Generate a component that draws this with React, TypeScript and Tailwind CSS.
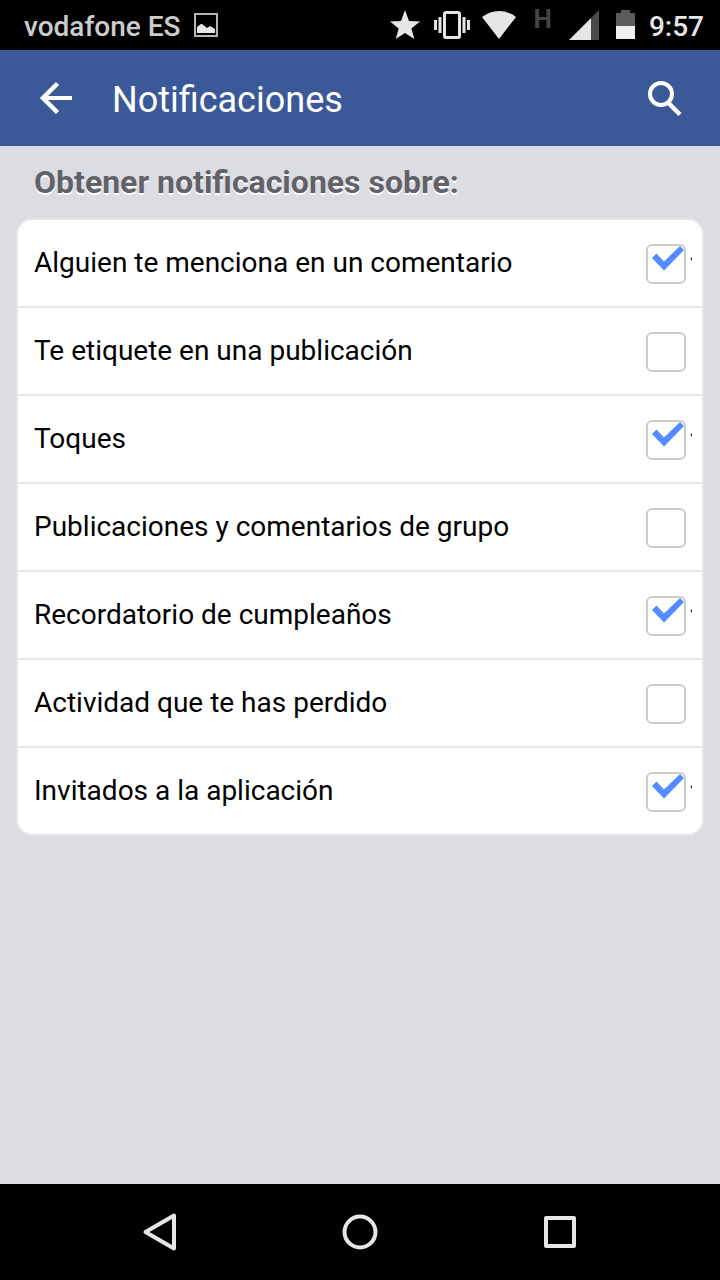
import { useState } from 'react';

interface Option {
  id: string;
  label: string;
  enabled: boolean;
}

const OPTIONS: Option[] = [
  { id: 'mention',   label: 'Alguien te menciona en un comentario', enabled: true },
  { id: 'tag',       label: 'Te etiquete en una publicación',       enabled: false },
  { id: 'pokes',     label: 'Toques',                               enabled: true },
  { id: 'group',     label: 'Publicaciones y comentarios de grupo', enabled: false },
  { id: 'birthdays', label: 'Recordatorio de cumpleaños',           enabled: true },
  { id: 'missed',    label: 'Actividad que te has perdido',         enabled: false },
  { id: 'invites',   label: 'Invitados a la aplicación',            enabled: true },
];

function StatusBar() {
  return (
    <div className="flex h-[50px] shrink-0 items-center justify-between bg-black pl-6 pr-4 text-[28px] leading-8 font-medium">
      <div className="flex items-center gap-3 text-[#cccccc]">
        <span className="pt-1">vodafone ES</span>
        <svg width="26" height="24" viewBox="0 0 26 24" fill="none" aria-hidden="true">
          <rect x="2" y="1" width="22" height="22" stroke="#b2b6b2" strokeWidth="2" />
          <path d="M4 20v-6l4-3h1l5 4 3-2 5 3v4z" fill="#e6e6e6" />
        </svg>
      </div>

      <div className="flex items-center gap-3 text-[#e6e6e6]">
        <svg width="32" height="30" viewBox="0 0 32 30" fill="currentColor" aria-hidden="true">
          <path d="M15 0l4 11 11 .5-8.6 7L24.3 29 15 23 5.7 29l3-10.5L0 11.5 11 11z" />
        </svg>
        <svg width="36" height="30" viewBox="0 0 36 30" fill="currentColor" aria-hidden="true">
          <rect x="10.5" y="2.5" width="15" height="25" rx="1.5" fill="none" stroke="currentColor" strokeWidth="3" />
          <path d="M0 10h3v10H0zM4.500 7h3v16h-3zM28.500 7h3v16h-3zM33 10h3v10h-3z" />
        </svg>
        <svg width="36" height="30" viewBox="0 0 36 30" fill="currentColor" aria-hidden="true">
          <path d="M0 7Q8 1 17 1t17 6L17 29z" />
        </svg>
        <span className="self-start pl-1 text-[26px] leading-6 font-bold text-[#444444]">H</span>
        <svg width="36" height="30" viewBox="0 0 36 30" aria-hidden="true">
          <path d="M5 30L27 8v22z" fill="#e6e6e6" />
          <path d="M27 8l8-8v30h-8z" fill="#4a4a4a" />
        </svg>
        <svg width="25" height="30" viewBox="0 0 25 30" aria-hidden="true">
          <path d="M9 0h9v3h5v13H4V3h5z" fill="#5c5c5c" />
          <path d="M4 16h19v13H4z" fill="#efefef" />
        </svg>
        <span className="pt-1">9:57</span>
      </div>
    </div>
  );
}

function AppHeader() {
  return (
    <header className="flex h-24 shrink-0 items-center bg-[#3b5998] px-9 text-white">
      <button type="button" aria-label="Atrás" className="flex size-10 items-center justify-center">
        <svg width="40" height="40" viewBox="0 0 40 40" fill="none" stroke="currentColor" aria-hidden="true">
          <path d="M36 20H7" strokeWidth="4" />
          <path d="M21.5 5.5L7 20l14.5 14.5" strokeWidth="4.5" />
        </svg>
      </button>
      <h1 className="flex-1 pt-1 pl-9 text-4xl leading-10">Notificaciones</h1>
      <button type="button" aria-label="Buscar" className="flex size-10 items-center justify-center">
        <svg width="40" height="40" viewBox="0 0 40 40" fill="none" stroke="currentColor" aria-hidden="true">
          <circle cx="17" cy="16" r="11" strokeWidth="4" />
          <path d="M25 25.500L36 36.500" strokeWidth="4.500" />
        </svg>
      </button>
    </header>
  );
}

interface OptionRowProps {
  option: Option;
  onToggle: (id: string) => void;
}

function OptionRow({ option, onToggle }: OptionRowProps) {
  return (
    <li>
      <label htmlFor={option.id} className="flex items-start px-4 pt-6 pb-[22px]">
        <span className="min-w-0 flex-1 text-[28px] leading-[38px] text-black">{option.label}</span>
        <span className="relative size-10 shrink-0">
          <input
            id={option.id}
            type="checkbox"
            checked={option.enabled}
            onChange={() => onToggle(option.id)}
            className="block size-10 appearance-none rounded-md border-2 border-[#cccccc] bg-white"
          />
          {option.enabled && (
            <svg
              width="46"
              height="40"
              viewBox="0 0 46 40"
              aria-hidden="true"
              className="pointer-events-none absolute top-0 left-0 max-w-none"
            >
              <path d="M6 14l4.500-4.500L18 17.500 34 2l4 4-20 20.500z" fill="#528cff" />
              <path d="M46 13.500a1.500 1.500 0 0 0 0 3z" fill="#3a4257" />
              <path d="M45 0h1v2h-1z" fill="#f0f0f2" />
            </svg>
          )}
        </span>
      </label>
    </li>
  );
}

function NavBar() {
  return (
    <nav className="flex h-24 shrink-0 items-center bg-black px-[60px] text-[#e6e6e6]">
      <button type="button" aria-label="Volver" className="flex flex-1 justify-center">
        <svg width="40" height="40" viewBox="0 0 40 40" fill="none" stroke="currentColor" strokeWidth="4" strokeLinejoin="round" aria-hidden="true">
          <path d="M34 3.500v33L5.500 20z" />
        </svg>
      </button>
      <button type="button" aria-label="Inicio" className="flex flex-1 justify-center">
        <svg width="40" height="40" viewBox="0 0 40 40" fill="none" stroke="currentColor" strokeWidth="4" aria-hidden="true">
          <circle cx="20" cy="20" r="15.500" />
        </svg>
      </button>
      <button type="button" aria-label="Recientes" className="flex flex-1 justify-center">
        <svg width="40" height="40" viewBox="0 0 40 40" fill="none" stroke="currentColor" strokeWidth="4" strokeLinejoin="round" aria-hidden="true">
          <path d="M6 6h28v28H6z" />
        </svg>
      </button>
    </nav>
  );
}

export default function App() {
  const [options, setOptions] = useState<Option[]>(OPTIONS);

  const handleToggle = (id: string) => {
    setOptions((prev) => prev.map((o) => (o.id === id ? { ...o, enabled: !o.enabled } : o)));
  };

  return (
    <div className="flex min-h-screen flex-col bg-[#dcdde2] font-['Roboto',sans-serif]">
      <StatusBar />
      <AppHeader />

      <main className="flex-1 px-4 pb-4">
        <h2 className="px-[18px] pt-4 pb-4 text-[32px] leading-10 font-bold text-[#616267] [text-shadow:0_2px_0_#ffffff]">
          Obtener notificaciones sobre:
        </h2>
        <ul className="divide-y-2 divide-[#e6e6e8] rounded-2xl border-2 border-[#e6e6e8] bg-white">
          {options.map((option) => (
            <OptionRow key={option.id} option={option} onToggle={handleToggle} />
          ))}
        </ul>
      </main>

      <NavBar />
    </div>
  );
}
